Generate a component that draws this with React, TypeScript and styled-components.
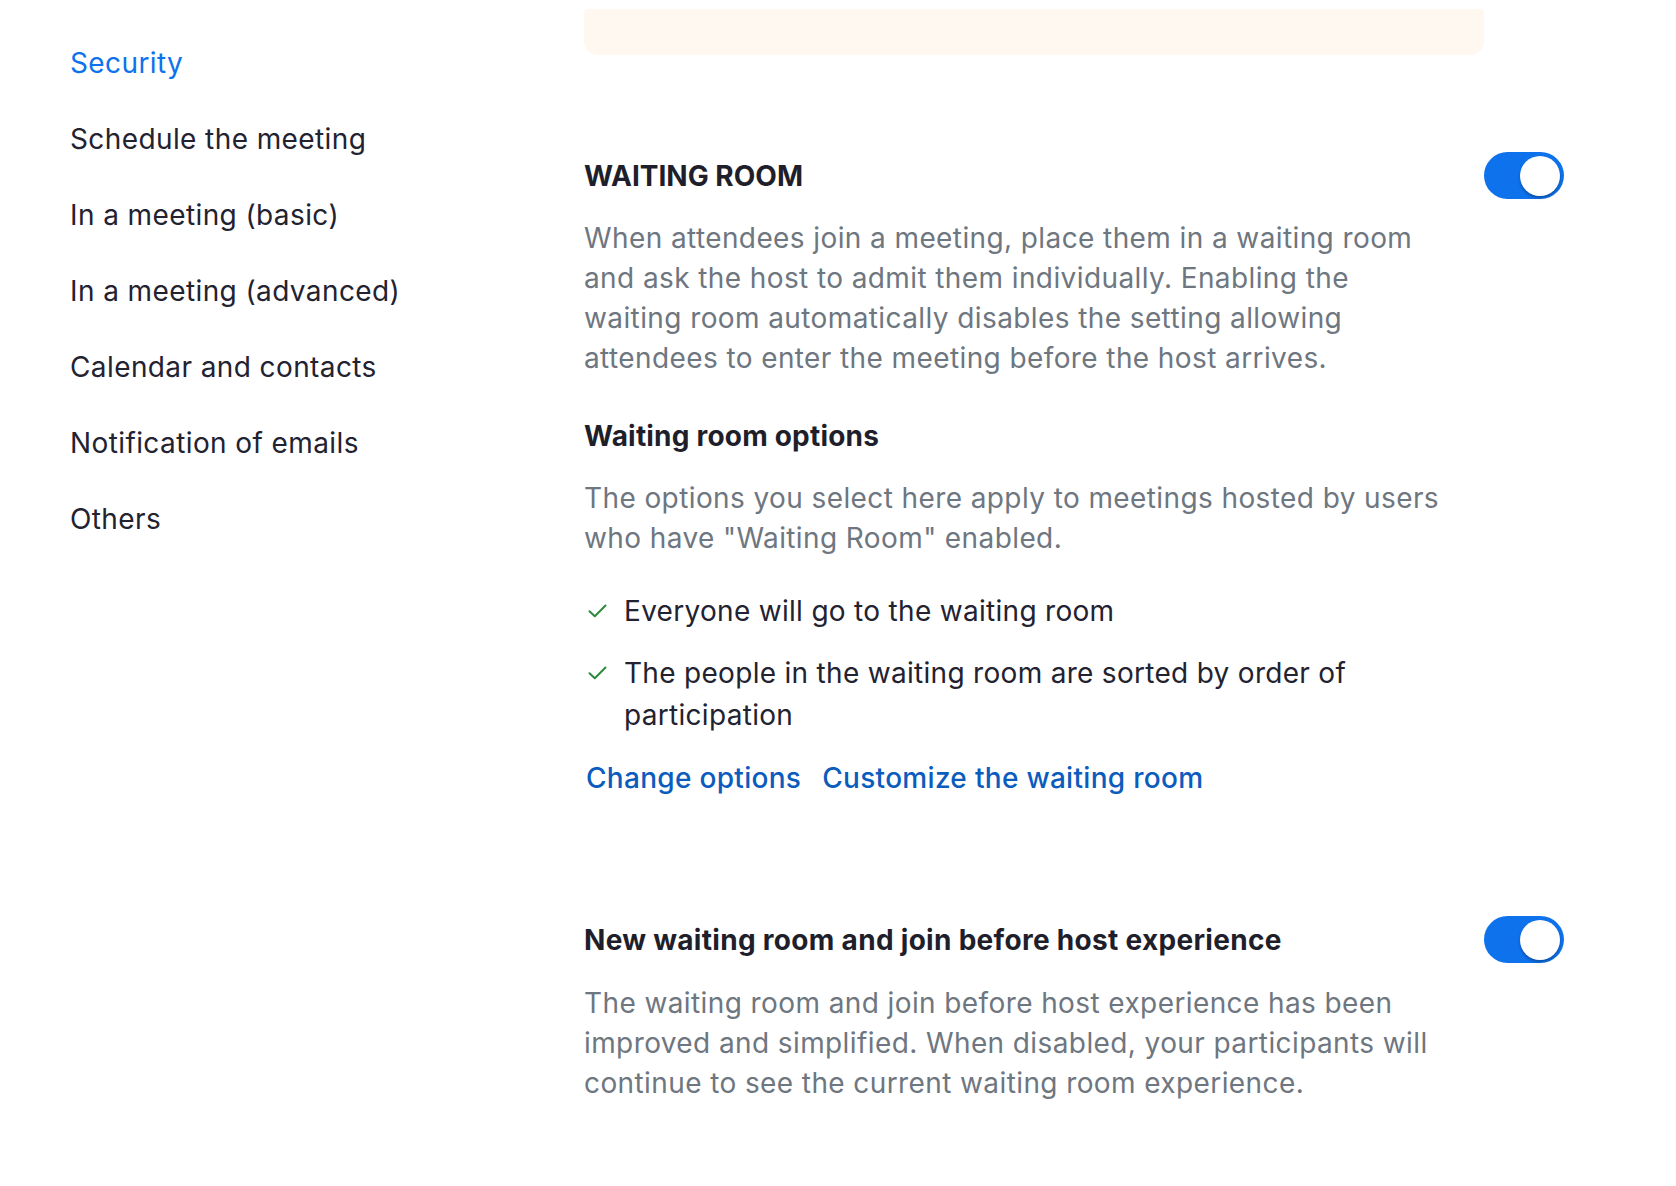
import React from "react";
import styled, { createGlobalStyle } from "styled-components";

const Global = createGlobalStyle`
  html, body { margin: 0; padding: 0; background: #ffffff; }
  body {
    font-family: Inter, "Noto Sans", "Liberation Sans", sans-serif;
    -webkit-font-smoothing: antialiased;
  }
  * { box-sizing: border-box; }
`;

const Page = styled.div`
  display: flex;
  align-items: flex-start;
  width: 1676px;
  min-height: 1186px;
`;

const Sidebar = styled.nav`
  width: 584px;
  flex-shrink: 0;
  padding: 44px 0 0 70px;
  display: flex;
  flex-direction: column;
  gap: 38px;
`;

const NavItem = styled.a<{ $active?: boolean }>`
  font-size: 28px;
  line-height: 38px;
  letter-spacing: 0.4px;
  color: ${(p) => (p.$active ? "#0e72ed" : "#222230")};
  text-decoration: none;
`;

const Main = styled.main`
  width: 980px;
  padding-top: 9px;
  display: flex;
  flex-direction: column;
`;

const Notice = styled.div`
  width: 900px;
  height: 46px;
  background: #fff8f1;
  border-radius: 4px 4px 14px 14px;
`;

const Section = styled.section<{ $top: number }>`
  margin-top: ${(p) => p.$top}px;
  display: flex;
  flex-direction: column;
`;

const HeaderRow = styled.div`
  display: flex;
  align-items: center;
  justify-content: space-between;
  height: 47px;
`;

const Title = styled.h2<{ $upper?: boolean }>`
  margin: 0;
  font-size: 28px;
  font-weight: 700;
  letter-spacing: ${(p) => (p.$upper ? "0" : "0.3px")};
  color: #1f1f2b;
  text-transform: ${(p) => (p.$upper ? "uppercase" : "none")};
`;

const Toggle = styled.button`
  width: 80px;
  height: 47px;
  border: none;
  padding: 0 4px;
  border-radius: 24px;
  background: #0e72ed;
  display: flex;
  align-items: center;
  justify-content: flex-end;
  cursor: pointer;
`;

const Knob = styled.span`
  width: 40px;
  height: 40px;
  border-radius: 50%;
  background: #ffffff;
  box-shadow: 0 2px 3px rgba(0, 0, 0, 0.3);
`;

const Desc = styled.p<{ $top: number }>`
  margin: ${(p) => p.$top}px 0 0;
  max-width: 900px;
  font-size: 28px;
  line-height: 40px;
  letter-spacing: 0.4px;
  color: #6e7680;
`;

const SubTitle = styled.h3`
  margin: 40px 0 0;
  font-size: 28px;
  line-height: 36px;
  font-weight: 700;
  letter-spacing: 0.2px;
  color: #1f1f2b;
`;

const CheckList = styled.ul`
  list-style: none;
  margin: 32px 0 0;
  padding: 0;
  display: flex;
  flex-direction: column;
  gap: 20px;
`;

const CheckItem = styled.li`
  display: flex;
  align-items: flex-start;
  gap: 17px;
  font-size: 28px;
  line-height: 42px;
  letter-spacing: 0.3px;
  color: #222230;
`;

const CheckIcon = styled.svg`
  flex-shrink: 0;
  margin: 14px 0 0 4px;
`;

const Links = styled.div`
  margin-top: 22px;
  padding-left: 2px;
  display: flex;
  gap: 21px;
`;

const LinkText = styled.a`
  font-size: 28px;
  line-height: 40px;
  font-weight: 500;
  letter-spacing: 0.3px;
  color: #0b5cbd;
  text-decoration: none;
`;

const Check = () => (
  <CheckIcon width="19" height="14" viewBox="0 0 19 14">
    <path d="M1.5 7.2 L6.8 12.2 L17.5 1.5" fill="none" stroke="#2b8a3e" strokeWidth="2" strokeLinecap="round" strokeLinejoin="round" />
  </CheckIcon>
);

const nav = [
  "Security",
  "Schedule the meeting",
  "In a meeting (basic)",
  "In a meeting (advanced)",
  "Calendar and contacts",
  "Notification of emails",
  "Others",
];

export default function App() {
  return (
    <>
      <Global />
      <Page>
        <Sidebar>
          {nav.map((n, i) => (
            <NavItem key={n} $active={i === 0} href="#">
              {n}
            </NavItem>
          ))}
        </Sidebar>
        <Main>
          <Notice />
          <Section $top={97}>
            <HeaderRow>
              <Title $upper>Waiting room</Title>
              <Toggle aria-label="Waiting room">
                <Knob />
              </Toggle>
            </HeaderRow>
            <Desc $top={19}>
              When attendees join a meeting, place them in a waiting room
              <br />
              and ask the host to admit them individually. Enabling the
              <br />
              waiting room automatically disables the setting allowing
              <br />
              attendees to enter the meeting before the host arrives.
            </Desc>
            <SubTitle>Waiting room options</SubTitle>
            <Desc $top={24}>
              The options you select here apply to meetings hosted by users
              <br />
              who have "Waiting Room" enabled.
            </Desc>
            <CheckList>
              <CheckItem>
                <Check />
                <span>Everyone will go to the waiting room</span>
              </CheckItem>
              <CheckItem>
                <Check />
                <span>
                  The people in the waiting room are sorted by order of
                  <br />
                  participation
                </span>
              </CheckItem>
            </CheckList>
            <Links>
              <LinkText href="#">Change options</LinkText>
              <LinkText href="#">Customize the waiting room</LinkText>
            </Links>
          </Section>
          <Section $top={118}>
            <HeaderRow>
              <Title>New waiting room and join before host experience</Title>
              <Toggle aria-label="New waiting room">
                <Knob />
              </Toggle>
            </HeaderRow>
            <Desc $top={20}>
              The waiting room and join before host experience has been
              <br />
              improved and simplified. When disabled, your participants will
              <br />
              continue to see the current waiting room experience.
            </Desc>
          </Section>
        </Main>
      </Page>
    </>
  );
}
